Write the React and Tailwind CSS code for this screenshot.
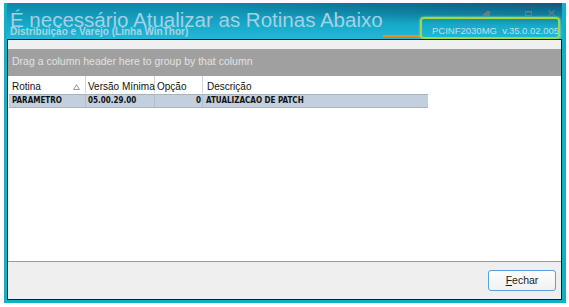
export default function App() {
  const sans = { fontFamily: '"Liberation Sans", Arial, sans-serif' };
  const grid = { fontFamily: '"DejaVu Sans Condensed", "DejaVu Sans", sans-serif' };

  return (
    <div className="w-[569px] h-[307px] bg-white pt-[3px] pl-[4px]" style={sans}>
      <div className="w-[562px] h-[300px] bg-[#12afc7] pl-[3px] pr-[4px] pb-[3px] flex flex-col">
        {/* header */}
        <div className="h-[36px] flex bg-[radial-gradient(ellipse_at_100%_0%,rgba(8,55,85,0.55),transparent_45%),linear-gradient(180deg,#0e86a8_0%,#16a6c6_55%,#1fbad8_100%)]">
          <div className="flex-1 pl-[3px] pt-[8.9px] whitespace-nowrap">
            <div className="text-[20.5px] leading-[16px] text-[#a6cfe4]">
              É necessário Atualizar as Rotinas Abaixo
            </div>
            <div className="text-[10px] leading-[8px] font-bold text-[#a8d4ea]">
              Distribuição e Varejo (Linha WinThor)
            </div>
          </div>
          <div className="w-[244px] flex flex-col">
            <div className="h-[14px] flex items-end justify-end pb-[1px] pr-[7px]">
              <svg width="7" height="5" viewBox="0 0 7 5" className="mr-[35px]">
                <rect x="0" y="0" width="7" height="5" fill="#627e8e" />
                <path d="M0 0 L4 0 L0 3 Z" fill="#425c6c" />
              </svg>
              <svg width="7" height="5" viewBox="0 0 7 5" className="mr-[16px]">
                <rect x="0.5" y="0.5" width="6" height="4" fill="none" stroke="#627e8e" />
                <rect x="0" y="0" width="7" height="1.6" fill="#627e8e" />
              </svg>
              <svg width="7" height="6" viewBox="0 0 7 6">
                <path d="M0.5 0.5 L6.5 5.5 M6.5 0.5 L0.5 5.5" stroke="#627e8e" strokeWidth="1.1" />
              </svg>
            </div>
            <div className="h-[22px] flex">
              <div className="flex-1 self-end h-[2px] mb-[2px] bg-[#e8901c]" />
              <div className="w-[140px] mr-[2px] border-2 border-[#a4d83e] rounded-[4px] shadow-[0_0_2px_#c8f27a] pl-[10px] pt-[7px] overflow-hidden whitespace-nowrap">
                <div className="text-[9.5px] leading-none text-[#c0dfea]">
                  PCINF2030MG&nbsp;&nbsp;v.35.0.02.005
                </div>
              </div>
            </div>
          </div>
        </div>

        {/* panel */}
        <div className="h-[261px] border border-[#1c1c1c] flex flex-col bg-white">
          <div className="h-[9px] bg-[#f0f0f0]" />
          <div className="h-[27px] bg-[#a0a0a0] flex items-center pl-[4px] pb-[1px] text-[10.5px] text-[#e2e2e2]">
            Drag a column header here to group by that column
          </div>
          <div className="h-[185px] bg-white pl-[1px]">
            <div className="flex h-[17px] text-[10px] leading-none text-[#111] w-[419px]">
              <div className="w-[77px] pl-[3px] pr-[5px] pt-[6px] flex justify-between border-r border-[#d6d6d6]">
                <span>Rotina</span>
                <svg width="7" height="6" viewBox="0 0 7 6" className="mt-[2px]">
                  <path d="M3.5 0.6 L6.4 5.5 L0.6 5.5 Z" fill="none" stroke="#8a8a8a" strokeWidth="0.9" />
                </svg>
              </div>
              <div className="w-[69px] pl-[2px] pt-[6px] border-r border-[#d6d6d6] whitespace-nowrap">Versão Mínima</div>
              <div className="w-[48px] pl-[2px] pt-[6px] border-r border-[#d6d6d6]">Opção</div>
              <div className="flex-1 pl-[4px] pt-[6px]">Descrição</div>
            </div>
            <div
              className="mt-[1px] flex h-[14px] w-[419px] bg-[#c2cfdc] border-y border-[#a7b4c0] text-[8px] font-bold leading-none text-[#111] items-center"
              style={grid}
            >
              <div className="w-[77px] pl-[3px] h-full flex items-center border-r border-[#b2bfcb]">PARAMETRO</div>
              <div className="w-[69px] pl-[2px] h-full flex items-center border-r border-[#b2bfcb]">05.00.29.00</div>
              <div className="w-[48px] pr-[1px] h-full flex items-center justify-end border-r border-[#b2bfcb]">0</div>
              <div className="flex-1 pl-[3px] h-full flex items-center">ATUALIZACAO DE PATCH</div>
            </div>
          </div>
          <div className="h-px bg-[#9c9c9c]" />
          <div className="h-[37px] bg-[#efefef] flex justify-end pt-[8px] pr-[5px]">
            <button className="w-[68px] h-[21px] rounded-[3px] border border-[#5b9fe0] bg-[linear-gradient(180deg,#fdfdfd,#f1f1f1)] text-[10.5px] text-[#1a1a1a] leading-none">
              <span className="underline underline-offset-[1px]">F</span>echar
            </button>
          </div>
        </div>
      </div>
    </div>
  );
}
